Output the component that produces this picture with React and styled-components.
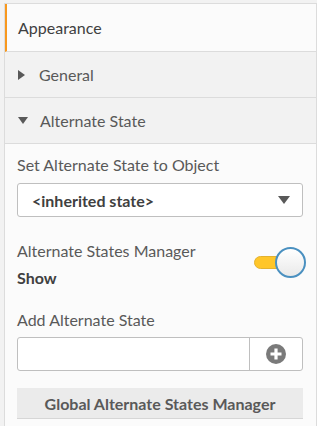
import React, { useState } from 'react';
import styled, { createGlobalStyle } from 'styled-components';

const GlobalStyle = createGlobalStyle`
  body {
    margin: 0;
    background-color: #f2f2f2;
    font-family: Lato, 'Open Sans', sans-serif;
    color: #404040;
  }
  * {
    box-sizing: border-box;
  }
`;

const Panel = styled.div`
  margin: 3px 0 0 4px;
  width: 313px;
  height: 423px;
  border-left: 1px solid #dcdcdc;
  border-right: 1px solid #dcdcdc;
  border-top: 1px solid #dcdcdc;
  background-color: #fbfbfb;
  overflow: hidden;
`;

const Tab = styled.div`
  height: 48px;
  display: flex;
  align-items: center;
  padding-left: 11px;
  font-size: 16px;
  background-color: #fbfbfb;
  border-left: 2px solid #f8981d;
  border-bottom: 1px solid #dcdcdc;
`;

const Header = styled.div`
  height: 46px;
  display: flex;
  align-items: center;
  padding-left: 13px;
  font-size: 16px;
  color: #595959;
  background-color: #f2f2f2;
  border-bottom: 1px solid #dcdcdc;
`;

const Caret = styled.span`
  width: 0;
  height: 0;
  margin-right: ${({ open }) => (open ? '12px' : '14px')};
  border-style: solid;
  ${({ open }) =>
    open
      ? 'border-width: 7px 5px 0 5px; border-color: #595959 transparent transparent transparent;'
      : 'border-width: 5px 0 5px 7px; border-color: transparent transparent transparent #595959;'}
`;

const Content = styled.div`
  padding: 11px 13px 0 12px;
`;

const Label = styled.div`
  font-size: 16px;
  color: #595959;
  line-height: 19px;
  margin-top: ${({ gap }) => gap || 0}px;
`;

const Select = styled.div`
  margin-top: 9px;
  height: 34px;
  display: flex;
  align-items: center;
  justify-content: space-between;
  padding: 0 12px 0 14px;
  border: 1px solid #bfbfbf;
  border-radius: 3px;
  background-color: #fff;
  font-size: 16px;
  font-weight: 700;
  color: #404040;
`;

const Arrow = styled.span`
  width: 0;
  height: 0;
  border-style: solid;
  border-width: 8px 6px 0 6px;
  border-color: #595959 transparent transparent transparent;
`;

const ToggleRow = styled.div`
  margin-top: 24px;
  display: flex;
  justify-content: space-between;
  align-items: flex-start;
`;

const Value = styled.div`
  margin-top: 8px;
  font-size: 16px;
  font-weight: 700;
  color: #404040;
`;

const Switch = styled.div`
  position: relative;
  width: 52px;
  height: 31px;
  margin-top: 6px;
  margin-right: -3px;
`;

const Track = styled.div`
  position: absolute;
  left: 0;
  top: 9px;
  width: 30px;
  height: 13px;
  border-radius: 7px;
  background-color: #ffc629;
  border: 1px solid #e3b230;
`;

const Knob = styled.div`
  position: absolute;
  right: 0;
  top: 0;
  width: 31px;
  height: 31px;
  border-radius: 50%;
  border: 2px solid #4a90c0;
  background: linear-gradient(#ffffff, #e9e9e9);
`;

const InputGroup = styled.div`
  margin-top: 8px;
  height: 34px;
  display: flex;
  border: 1px solid #bfbfbf;
  border-radius: 3px;
  background-color: #fff;
`;

const TextInput = styled.input`
  flex: 1;
  min-width: 0;
  border: none;
  outline: none;
  border-right: 1px solid #bfbfbf;
  background: transparent;
  font-family: inherit;
  font-size: 15px;
`;

const AddButton = styled.div`
  width: 52px;
  display: flex;
  align-items: center;
  justify-content: center;
`;

const GlobalBar = styled.div`
  margin-top: 17px;
  height: 31px;
  display: flex;
  align-items: center;
  justify-content: center;
  background-color: #ebebeb;
  border-bottom: 1px solid #d6d6d6;
  font-size: 16px;
  font-weight: 700;
  color: #595959;
`;

export default () => {
  const [stateName, setStateName] = useState('');

  return (
    <>
      <GlobalStyle />
      <Panel>
        <Tab>Appearance</Tab>
        <Header>
          <Caret />
          General
        </Header>
        <Header>
          <Caret open />
          Alternate State
        </Header>
        <Content>
          <Label>Set Alternate State to Object</Label>
          <Select>
            &lt;inherited state&gt;
            <Arrow />
          </Select>

          <ToggleRow>
            <div>
              <Label>Alternate States Manager</Label>
              <Value>Show</Value>
            </div>
            <Switch>
              <Track />
              <Knob />
            </Switch>
          </ToggleRow>

          <Label gap={23}>Add Alternate State</Label>
          <InputGroup>
            <TextInput value={stateName} onChange={({ target: { value } }) => setStateName(value)} />
            <AddButton>
              <svg width='20' height='20' viewBox='0 0 20 20'>
                <circle cx='10' cy='10' r='10' fill='#7a7a7a' />
                <path d='M10 4.5v11M4.5 10h11' stroke='#fff' strokeWidth='3.2' />
              </svg>
            </AddButton>
          </InputGroup>

          <GlobalBar>Global Alternate States Manager</GlobalBar>
        </Content>
      </Panel>
    </>
  );
};
